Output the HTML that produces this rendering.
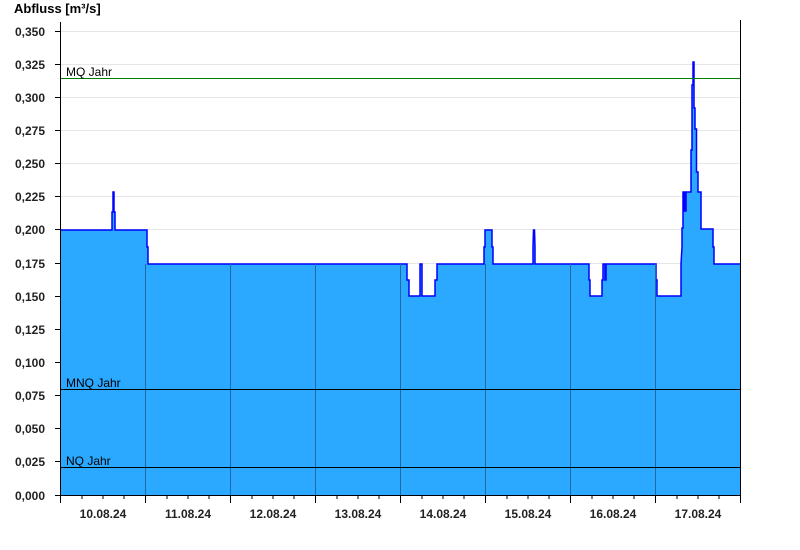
<!DOCTYPE html>
<html><head><meta charset="utf-8"><style>
html,body{margin:0;padding:0;background:#fff;}
svg{display:block;font-family:"Liberation Sans",Arial,sans-serif;}
</style></head><body>
<svg width="800" height="550" viewBox="0 0 800 550">
<rect width="800" height="550" fill="#fff"/>
<g stroke="#e6e6e6" stroke-width="1">
<line x1="61" y1="31.5" x2="740" y2="31.5"/><line x1="61" y1="64.5" x2="740" y2="64.5"/><line x1="61" y1="97.5" x2="740" y2="97.5"/><line x1="61" y1="130.5" x2="740" y2="130.5"/><line x1="61" y1="163.5" x2="740" y2="163.5"/><line x1="61" y1="196.5" x2="740" y2="196.5"/><line x1="61" y1="229.5" x2="740" y2="229.5"/><line x1="61" y1="263.5" x2="740" y2="263.5"/>
</g>
<polygon fill="#2ba8ff" points="61,230 112,230 112,212 113,212 113,192 114,192 114,212 115,212 115,230 147,230 147,247 148,247 148,264 407,264 407,280 409,280 409,296 420,296 420,264 422,264 422,296 435,296 435,280 437,280 437,264 484,264 484,247 485,247 485,230 492,230 492,247 493,247 493,264 533,264 533,247 533.5,230 534.5,230 535,247 535,264 589,264 589,280 590,280 590,296 602,296 602,280 603,280 603,264 605,264 605,280 606,280 606,264 656,264 656,280 657,280 657,296 681,296 681,264 682,247 682,228 683,228 683,192 684.5,192 684.5,211 686,211 686,192 691,192 691,150 692,150 692,85 693,85 693,62 694,62 694,108 695,108 695,129 696.5,129 696.5,172 698,172 698,192 701,192 701,229 713,229 713,247 714,247 714,264 740,264 740,495 61,495"/>
<polyline fill="none" stroke="#0000ff" stroke-width="1.5" points="61,230 112,230 112,212 113,212 113,192 114,192 114,212 115,212 115,230 147,230 147,247 148,247 148,264 407,264 407,280 409,280 409,296 420,296 420,264 422,264 422,296 435,296 435,280 437,280 437,264 484,264 484,247 485,247 485,230 492,230 492,247 493,247 493,264 533,264 533,247 533.5,230 534.5,230 535,247 535,264 589,264 589,280 590,280 590,296 602,296 602,280 603,280 603,264 605,264 605,280 606,280 606,264 656,264 656,280 657,280 657,296 681,296 681,264 682,247 682,228 683,228 683,192 684.5,192 684.5,211 686,211 686,192 691,192 691,150 692,150 692,85 693,85 693,62 694,62 694,108 695,108 695,129 696.5,129 696.5,172 698,172 698,192 701,192 701,229 713,229 713,247 714,247 714,264 740,264"/>
<g stroke="#1f6aa0" stroke-width="1">
<line x1="145.5" y1="264" x2="145.5" y2="495"/><line x1="230.5" y1="264" x2="230.5" y2="495"/><line x1="315.5" y1="264" x2="315.5" y2="495"/><line x1="400.5" y1="264" x2="400.5" y2="495"/><line x1="485.5" y1="264" x2="485.5" y2="495"/><line x1="570.5" y1="264" x2="570.5" y2="495"/><line x1="655.5" y1="264" x2="655.5" y2="495"/>
</g>
<line x1="61" y1="78.5" x2="740" y2="78.5" stroke="#008000" stroke-width="1"/>
<line x1="61" y1="389.5" x2="740" y2="389.5" stroke="#000" stroke-width="1"/>
<line x1="61" y1="467.5" x2="740" y2="467.5" stroke="#000" stroke-width="1"/>
<g font-size="12" fill="#000">
<text x="66" y="76">MQ Jahr</text>
<text x="66" y="387">MNQ Jahr</text>
<text x="66" y="465">NQ Jahr</text>
</g>
<g stroke="#000" stroke-width="1">
<line x1="60.5" y1="22" x2="60.5" y2="495.5"/>
<line x1="740.5" y1="20" x2="740.5" y2="495.5"/>
<line x1="60" y1="495.5" x2="741" y2="495.5"/>
<line x1="55" y1="31.5" x2="60" y2="31.5"/><line x1="55" y1="64.5" x2="60" y2="64.5"/><line x1="55" y1="97.5" x2="60" y2="97.5"/><line x1="55" y1="130.5" x2="60" y2="130.5"/><line x1="55" y1="163.5" x2="60" y2="163.5"/><line x1="55" y1="196.5" x2="60" y2="196.5"/><line x1="55" y1="229.5" x2="60" y2="229.5"/><line x1="55" y1="263.5" x2="60" y2="263.5"/><line x1="55" y1="296.5" x2="60" y2="296.5"/><line x1="55" y1="329.5" x2="60" y2="329.5"/><line x1="55" y1="362.5" x2="60" y2="362.5"/><line x1="55" y1="395.5" x2="60" y2="395.5"/><line x1="55" y1="428.5" x2="60" y2="428.5"/><line x1="55" y1="461.5" x2="60" y2="461.5"/><line x1="55" y1="495.5" x2="60" y2="495.5"/>
<line x1="60.5" y1="495" x2="60.5" y2="503"/><line x1="145.5" y1="495" x2="145.5" y2="503"/><line x1="230.5" y1="495" x2="230.5" y2="503"/><line x1="315.5" y1="495" x2="315.5" y2="503"/><line x1="400.5" y1="495" x2="400.5" y2="503"/><line x1="485.5" y1="495" x2="485.5" y2="503"/><line x1="570.5" y1="495" x2="570.5" y2="503"/><line x1="655.5" y1="495" x2="655.5" y2="503"/><line x1="740.5" y1="495" x2="740.5" y2="503"/>
<line x1="82" y1="495" x2="82" y2="499"/><line x1="103" y1="495" x2="103" y2="499"/><line x1="124" y1="495" x2="124" y2="499"/>
<line x1="167" y1="495" x2="167" y2="499"/><line x1="188" y1="495" x2="188" y2="499"/><line x1="209" y1="495" x2="209" y2="499"/>
<line x1="252" y1="495" x2="252" y2="499"/><line x1="273" y1="495" x2="273" y2="499"/><line x1="294" y1="495" x2="294" y2="499"/>
<line x1="337" y1="495" x2="337" y2="499"/><line x1="358" y1="495" x2="358" y2="499"/><line x1="379" y1="495" x2="379" y2="499"/>
<line x1="422" y1="495" x2="422" y2="499"/><line x1="443" y1="495" x2="443" y2="499"/><line x1="464" y1="495" x2="464" y2="499"/>
<line x1="507" y1="495" x2="507" y2="499"/><line x1="528" y1="495" x2="528" y2="499"/><line x1="549" y1="495" x2="549" y2="499"/>
<line x1="592" y1="495" x2="592" y2="499"/><line x1="613" y1="495" x2="613" y2="499"/><line x1="634" y1="495" x2="634" y2="499"/>
<line x1="677" y1="495" x2="677" y2="499"/><line x1="698" y1="495" x2="698" y2="499"/><line x1="719" y1="495" x2="719" y2="499"/>
</g>
<g font-size="12" font-weight="bold" fill="#222" text-anchor="end">
<text x="45" y="36">0,350</text><text x="45" y="69">0,325</text><text x="45" y="102">0,300</text><text x="45" y="135">0,275</text><text x="45" y="168">0,250</text><text x="45" y="201">0,225</text><text x="45" y="234">0,200</text><text x="45" y="268">0,175</text><text x="45" y="301">0,150</text><text x="45" y="334">0,125</text><text x="45" y="367">0,100</text><text x="45" y="400">0,075</text><text x="45" y="433">0,050</text><text x="45" y="466">0,025</text><text x="45" y="500">0,000</text>
</g>
<g font-size="12" font-weight="bold" fill="#222" text-anchor="middle">
<text x="103" y="518">10.08.24</text><text x="188" y="518">11.08.24</text><text x="273" y="518">12.08.24</text><text x="358" y="518">13.08.24</text><text x="443" y="518">14.08.24</text><text x="528" y="518">15.08.24</text><text x="613" y="518">16.08.24</text><text x="698" y="518">17.08.24</text>
</g>
<text x="14" y="13" font-size="13" font-weight="bold" fill="#000">Abfluss [m³/s]</text>
</svg>
</body></html>
